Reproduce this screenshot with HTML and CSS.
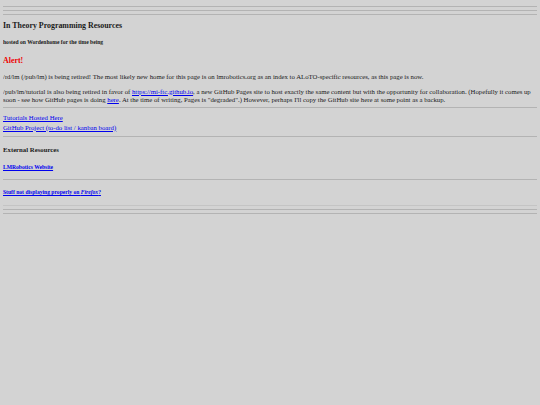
FILE: index.html
```html
<!DOCTYPE html>
<html lang="en">
<head>
  <meta charset="UTF-8" />
  <title>In Theory Programming Resources</title>
  <link rel="stylesheet" href="styles.css">
</head>
<body>

  <hr/>
  <hr/>
  <hr/>

  <h3 class="title">In Theory Programming Resources</h3>
  <h5>hosted on Wordenhome for the time being</h5>

  <h3 class="alert">Alert!</h3>
  <p>/rd/lm (/pub/lm) is being retired! The most likely new home for this page is on lmrobotics.org as an index to ALoTO-specific resources, as this page is now.</p>
  <p class="last">/pub/lm/tutorial is also being retired in favor of <a href="#">https://mi-ftc.github.io</a>, a new GitHub Pages site to host exactly the same content but with the opportunity for collaboration. (Hopefully it comes up soon - see how GitHub pages is doing <a href="#">here</a>. At the time of writing, Pages is "degraded".) However, perhaps I'll copy the GitHub site here at some point as a backup.</p>

  <hr/>

  <div class="links">
    <a href="#">Tutorials Hosted Here</a><br/>
    <a href="#">GitHub Project (to-do list / kanban board)</a>
  </div>

  <hr/>

  <h4>External Resources</h4>
  <h5><a href="#">LMRobotics Website</a></h5>

  <hr/>

  <h5><a href="#">Stuff not displaying properly on <i>Firefox</i>?</a></h5>

  <hr class="faint"/>
  <hr/>
  <hr/>

</body>
</html>
```

FILE: styles.css
```css
body {
  margin: 3px;
  font-family: 'Liberation Serif', serif;
  font-size: 6.75px;
  background-color: #d3d3d3;
  color: #1a1a1a;
}
hr {
  height: 0;
  border: 0;
  border-top: 1px solid #b3b3b3;
  margin: 3px 0;
}
hr.faint {
  border-top-color: #c4c4c4;
}
h3 {
  font-size: 7.9px;
  margin: 7.9px 0;
}
h4 {
  font-size: 6.75px;
  margin: 9px 0 11px;
}
h5 {
  font-size: 5.6px;
  margin: 9.4px 0;
}
p {
  margin: 6.75px 0;
  line-height: 8px;
}
p.last {
  margin-bottom: 3px;
}
a {
  color: #0000ee;
  text-decoration-thickness: 0.5px;
}
.title {
  margin-top: 6px;
}
.alert {
  color: #ee0000;
  margin-top: 10.5px;
}
.links {
  margin: 5px 0 1px;
  line-height: 10px;
}
```
